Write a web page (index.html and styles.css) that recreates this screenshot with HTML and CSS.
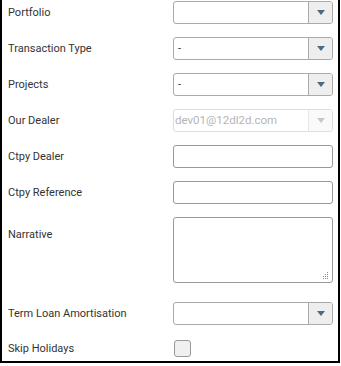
FILE: index.html
```html
<!DOCTYPE html>
<html>
<head>
<meta charset="utf-8">
<link rel="stylesheet" href="styles.css">
</head>
<body>
<div class="panel">
  <div class="row">
    <label class="lbl">Portfolio</label>
    <div class="select"><span class="val"></span><span class="btn"><span class="tri"></span></span></div>
  </div>
  <div class="row">
    <label class="lbl">Transaction Type</label>
    <div class="select"><span class="val">-</span><span class="btn"><span class="tri"></span></span></div>
  </div>
  <div class="row">
    <label class="lbl">Projects</label>
    <div class="select"><span class="val">-</span><span class="btn"><span class="tri"></span></span></div>
  </div>
  <div class="row">
    <label class="lbl">Our Dealer</label>
    <div class="select disabled"><span class="val">dev01@12dl2d.com</span><span class="btn"><span class="tri"></span></span></div>
  </div>
  <div class="row">
    <label class="lbl">Ctpy Dealer</label>
    <div class="input"></div>
  </div>
  <div class="row">
    <label class="lbl">Ctpy Reference</label>
    <div class="input"></div>
  </div>
  <div class="row row-narr">
    <label class="lbl lbl-top">Narrative</label>
    <div class="textarea">
      <svg class="grip" width="7" height="7" viewBox="0 0 7 7">
        <rect x="5" y="0" width="1" height="1" fill="#888"/>
        <rect x="3" y="2" width="1" height="1" fill="#888"/>
        <rect x="5" y="2" width="1" height="1" fill="#888"/>
        <rect x="1" y="4" width="1" height="1" fill="#888"/>
        <rect x="3" y="4" width="1" height="1" fill="#888"/>
        <rect x="5" y="4" width="1" height="1" fill="#888"/>
        <rect x="1" y="6" width="1" height="1" fill="#888"/>
        <rect x="3" y="6" width="1" height="1" fill="#888"/>
        <rect x="5" y="6" width="1" height="1" fill="#888"/>
      </svg>
    </div>
  </div>
  <div class="row row-term">
    <label class="lbl">Term Loan Amortisation</label>
    <div class="select"><span class="val"></span><span class="btn"><span class="tri"></span></span></div>
  </div>
  <div class="row row-check">
    <label class="lbl lbl-check">Skip Holidays</label>
    <div class="check"></div>
  </div>
</div>
</body>
</html>
```
FILE: styles.css
```css
html, body {
  margin: 0;
  padding: 0;
  background: #fff;
}
body {
  font-family: Roboto, "Liberation Sans", sans-serif;
  font-size: 11px;
  color: #333;
}
.panel {
  box-sizing: border-box;
  width: 340px;
  height: 363px;
  border: 2px solid #000;
  border-top: none;
  padding: 1px 0 0 6px;
}
.row {
  display: grid;
  grid-template-columns: 165px 160px;
  align-items: start;
  margin-bottom: 13px;
}
.row-narr { margin-bottom: 19px; }
.row-term { margin-bottom: 15px; }
.lbl {
  line-height: 23px;
  white-space: nowrap;
}
.lbl-top { margin-top: 6px; }
.lbl-check { line-height: 17px; }
.select {
  box-sizing: border-box;
  height: 23px;
  border: 1px solid #aaa;
  border-radius: 3px;
  background: #fff;
  display: flex;
  overflow: hidden;
}
.select .val {
  flex: 1;
  padding-left: 4px;
  line-height: 21px;
  color: #333;
  white-space: nowrap;
}
.select .btn {
  width: 23px;
  border-left: 1px solid #aaa;
  background: #eee;
  display: flex;
  align-items: center;
  justify-content: center;
}
.tri {
  width: 0;
  height: 0;
  border-left: 4px solid transparent;
  border-right: 4px solid transparent;
  border-top: 5px solid #4a6b85;
}
.select.disabled {
  border-color: #ddd;
}
.select.disabled .val {
  color: #b5b5b5;
  padding-left: 1px;
  font-size: 11.5px;
}
.select.disabled .btn {
  border-left-color: #e6e6e6;
  background: #fafafa;
}
.select.disabled .tri {
  border-top-color: #c8c8c8;
}
.input {
  box-sizing: border-box;
  height: 23px;
  border: 1px solid #999;
  border-radius: 3px;
  background: #fff;
}
.textarea {
  position: relative;
  box-sizing: border-box;
  height: 66px;
  border: 1px solid #999;
  border-radius: 3px;
  background: #fff;
}
.grip {
  position: absolute;
  right: 3px;
  bottom: 3px;
}
.check {
  box-sizing: border-box;
  width: 17px;
  height: 17px;
  margin-left: 1px;
  border: 1px solid #999;
  border-radius: 3px;
  background: #f0f0f0;
}
```
